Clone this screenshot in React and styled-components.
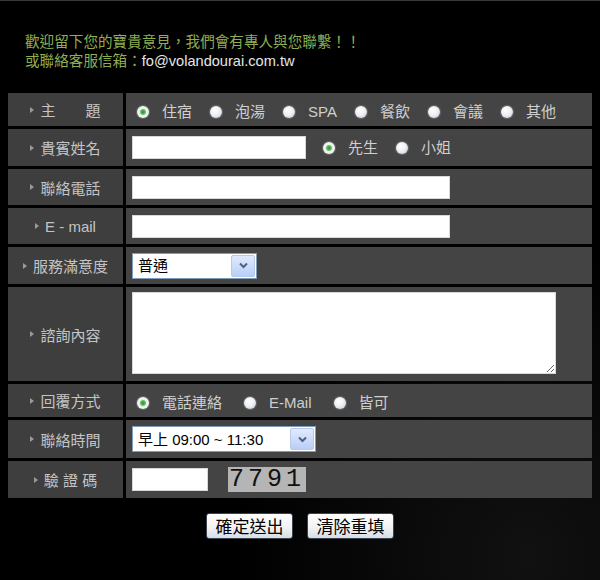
import React from 'react';
import styled, { createGlobalStyle } from 'styled-components';

const GlobalStyle = createGlobalStyle`
  body {
    margin: 0;
    background: #000;
    font-family: 'Liberation Sans', 'Noto Sans CJK TC', sans-serif;
  }
`;

const Page = styled.div`
  width: 600px;
  height: 580px;
  box-sizing: border-box;
  border-top: 1px solid #3a3a3a;
  background: radial-gradient(ellipse at 88% 96%, #111 0%, #000 40%);
  overflow: hidden;
`;

const Intro = styled.div`
  padding: 32px 0 0 25px;
  font-size: 14.6px;
  line-height: 19px;
  color: #8fae52;
`;

const Mail = styled.span`
  color: #e6e6e6;
`;

const Table = styled.div`
  display: flex;
  flex-direction: column;
  gap: 3px;
  width: 584px;
  margin: 22px 0 0 8px;
`;

const Row = styled.div`
  display: flex;
  gap: 3px;
  height: ${p => p.h}px;
`;

const Label = styled.div`
  width: 115px;
  flex: none;
  background: #3e3e3e;
  color: #c4c4c4;
  font-size: 15px;
  display: flex;
  align-items: center;
  justify-content: center;
  gap: 6px;
  white-space: pre;

  &::before {
    content: '';
    border-left: 4px solid #9a9a9a;
    border-top: 3px solid transparent;
    border-bottom: 3px solid transparent;
  }
`;

const Cell = styled.div`
  flex: 1;
  background: #444;
  display: flex;
  align-items: center;
  padding-left: 6px;
  color: #cfcfcf;
  font-size: 15px;
`;

const Choice = styled.label`
  display: flex;
  align-items: center;
  gap: 13px;
  margin-right: ${p => p.mr ?? 13}px;
  line-height: 20px;
  padding-top: ${p => (p.low ? 4 : 0)}px;
`;

const Radio = styled.input.attrs({ type: 'radio' })`
  appearance: none;
  margin: 0 0 0 5px;
  width: 12px;
  height: 12px;
  border-radius: 50%;
  background: radial-gradient(circle at 40% 35%, #ffffff 0%, #eef1f5 45%, #c3c9d2 100%);
  box-shadow: 0 0 1px 1px rgba(255, 255, 255, 0.2);

  &:checked {
    background: radial-gradient(circle, #2e8a36 0%, #5fbf5a 28%, #e9f3e9 42%, #f4f6f8 70%, #c3c9d2 100%);
  }
`;

const TextInput = styled.input.attrs({ type: 'text' })`
  box-sizing: border-box;
  width: ${p => p.w}px;
  height: 23px;
  border: 1px solid #d8d8d8;
  background: #fff;
  margin: 0;
`;

const SelectBox = styled.div`
  box-sizing: border-box;
  width: ${p => p.w}px;
  height: 26px;
  display: flex;
  align-items: stretch;
  border: 1px solid #7f9db9;
  background: #fff;
  padding: 1px;
  gap: 2px;
`;

const Select = styled.select`
  appearance: none;
  flex: 1;
  min-width: 0;
  border: none;
  outline: none;
  background: #fff;
  font-family: 'Liberation Sans', 'Noto Sans CJK TC', sans-serif;
  font-size: 15px;
  color: #000;
  padding: 0 0 0 4px;
`;

const Arrow = styled.span`
  width: 22px;
  flex: none;
  border: 1px solid #b7c9ea;
  border-radius: 2px;
  background: linear-gradient(#e1eafd, #b9cff7);
  display: flex;
  align-items: center;
  justify-content: center;
`;

const TextArea = styled.textarea`
  box-sizing: border-box;
  width: 424px;
  height: 82px;
  border: 1px solid #d8d8d8;
  background: #fff;
  margin: 0 0 2px;
`;

const Captcha = styled.div`
  width: 78px;
  height: 25px;
  margin-left: 20px;
  background: #b5b5b5;
  color: #111;
  font-family: 'Liberation Mono', monospace;
  font-size: 25px;
  line-height: 25px;
  letter-spacing: 4px;
  text-align: center;
`;

const Buttons = styled.div`
  display: flex;
  justify-content: center;
  gap: 14px;
  margin-top: 15px;
`;

const Button = styled.button`
  width: 87px;
  height: 26px;
  padding: 0;
  border: 1px solid #3c4452;
  border-radius: 3px;
  background: linear-gradient(#ffffff 0%, #f3f3f3 55%, #d6dde6 100%);
  font-family: 'Noto Sans CJK TC', sans-serif;
  font-size: 17px;
  line-height: 24px;
  color: #000;
`;

const Chevron = () => (
  <svg width="9" height="7" viewBox="0 0 9 7">
    <path d="M1 1.5 L4.5 5 L8 1.5" fill="none" stroke="#4d6185" strokeWidth="2" />
  </svg>
);

const Dropdown = ({ w, options }) => (
  <SelectBox w={w}>
    <Select defaultValue={options[0]}>
      {options.map(o => (
        <option key={o}>{o}</option>
      ))}
    </Select>
    <Arrow>
      <Chevron />
    </Arrow>
  </SelectBox>
);

const RadioGroup = ({ name, items, low, mr }) =>
  items.map((item, i) => (
    <Choice key={item} low={low} mr={mr}>
      <Radio name={name} defaultChecked={i === 0} />
      {item}
    </Choice>
  ));

export default function App() {
  return (
    <Page>
      <GlobalStyle />
      <Intro>
        歡迎留下您的寶貴意見，我們會有專人與您聯繫！！
        <br />
        或聯絡客服信箱：<Mail>fo@volandourai.com.tw</Mail>
      </Intro>
      <Table>
        <Row h={33}>
          <Label>主　　題</Label>
          <Cell>
            <RadioGroup name="topic" low items={['住宿', '泡湯', 'SPA', '餐飲', '會議', '其他']} />
          </Cell>
        </Row>
        <Row h={37}>
          <Label>貴賓姓名</Label>
          <Cell>
            <TextInput w={174} />
            <Choice style={{ marginLeft: 12 }}>
              <Radio name="title" defaultChecked />
              先生
            </Choice>
            <Choice>
              <Radio name="title" />
              小姐
            </Choice>
          </Cell>
        </Row>
        <Row h={36}>
          <Label>聯絡電話</Label>
          <Cell>
            <TextInput w={318} />
          </Cell>
        </Row>
        <Row h={36}>
          <Label>E - mail</Label>
          <Cell>
            <TextInput w={318} />
          </Cell>
        </Row>
        <Row h={37}>
          <Label>服務滿意度</Label>
          <Cell>
            <Dropdown w={125} options={['普通', '滿意', '非常滿意', '不滿意']} />
          </Cell>
        </Row>
        <Row h={94}>
          <Label>諮詢內容</Label>
          <Cell>
            <TextArea />
          </Cell>
        </Row>
        <Row h={33}>
          <Label>回覆方式</Label>
          <Cell>
            <RadioGroup name="reply" low mr={17} items={['電話連絡', 'E-Mail', '皆可']} />
          </Cell>
        </Row>
        <Row h={38}>
          <Label>聯絡時間</Label>
          <Cell>
            <Dropdown w={184} options={['早上 09:00 ~ 11:30', '下午 13:30 ~ 17:30', '晚上 18:00 ~ 21:00']} />
          </Cell>
        </Row>
        <Row h={37}>
          <Label>驗 證 碼</Label>
          <Cell>
            <TextInput w={76} />
            <Captcha>7791</Captcha>
          </Cell>
        </Row>
      </Table>
      <Buttons>
        <Button>確定送出</Button>
        <Button>清除重填</Button>
      </Buttons>
    </Page>
  );
}
